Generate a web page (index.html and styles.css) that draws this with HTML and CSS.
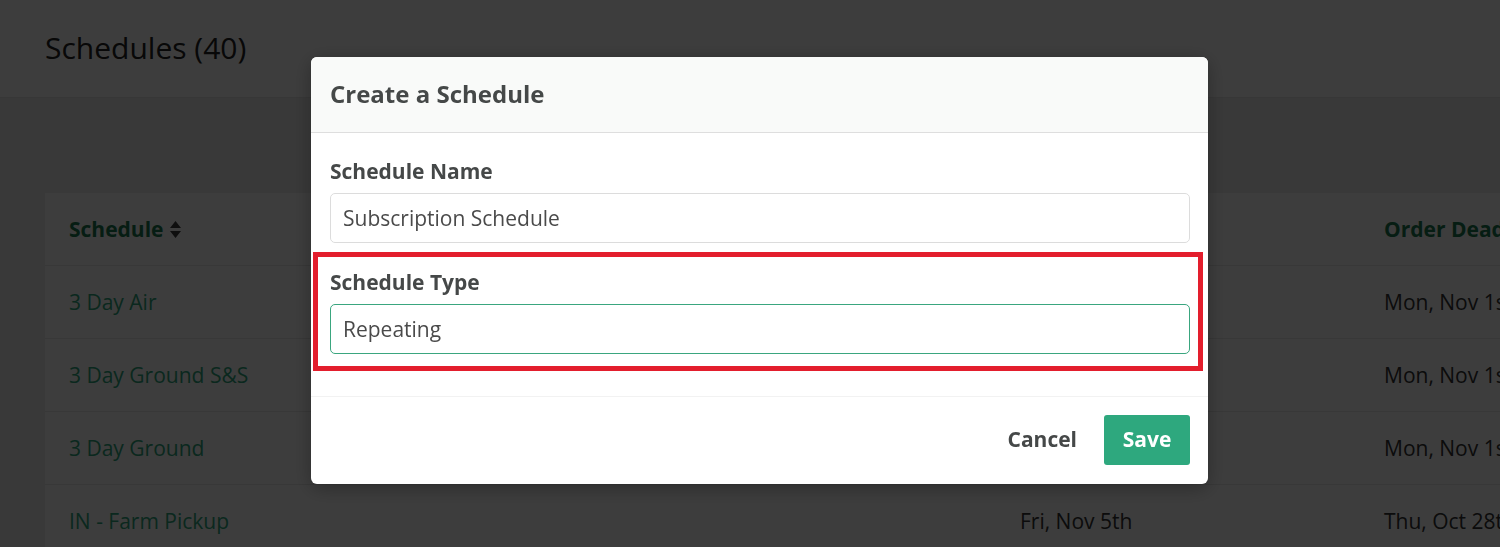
FILE: index.html
```html
<!DOCTYPE html>
<html>
<head>
    <title>Schedules</title>
    <link rel="stylesheet" href="styles.css">
</head>
<body>
    <div class="page-header">
        <h1>Schedules (40)</h1>
    </div>

    <div class="content">
        <div class="table-card">
            <div class="row head">
                <div class="col-name">Schedule
                    <svg class="sort" width="11" height="17" viewBox="0 0 11 17"><path d="M5.5 0 L11 7 H0 Z M0 10 H11 L5.5 17 Z" fill="#3a3a3a"/></svg>
                </div>
                <div class="col-date"></div>
                <div class="col-dead">Order Deadline</div>
            </div>
            <div class="row">
                <div class="col-name link">3 Day Air</div>
                <div class="col-date">Fri, Nov 5th</div>
                <div class="col-dead">Mon, Nov 1st</div>
            </div>
            <div class="row">
                <div class="col-name link">3 Day Ground S&amp;S</div>
                <div class="col-date">Fri, Nov 5th</div>
                <div class="col-dead">Mon, Nov 1st</div>
            </div>
            <div class="row">
                <div class="col-name link">3 Day Ground</div>
                <div class="col-date">Fri, Nov 5th</div>
                <div class="col-dead">Mon, Nov 1st</div>
            </div>
            <div class="row">
                <div class="col-name link">IN - Farm Pickup</div>
                <div class="col-date">Fri, Nov 5th</div>
                <div class="col-dead">Thu, Oct 28th</div>
            </div>
        </div>
    </div>

    <div class="backdrop">
        <div class="modal">
            <div class="modal-header">
                <h2>Create a Schedule</h2>
            </div>
            <div class="modal-body">
                <div class="form-group">
                    <label>Schedule Name</label>
                    <div class="input">Subscription Schedule</div>
                </div>
                <div class="form-group marked">
                    <label>Schedule Type</label>
                    <div class="input focus">Repeating</div>
                    <div class="highlight"></div>
                </div>
            </div>
            <div class="modal-footer">
                <button class="btn-cancel">Cancel</button>
                <button class="btn-save">Save</button>
            </div>
        </div>
    </div>
</body>
</html>
```

FILE: styles.css
```css
html, body { margin: 0; padding: 0; }
body {
    font-family: "Open Sans", "Noto Sans", sans-serif;
    background: #eeeeee;
    color: #4a4a4a;
    width: 1500px;
    height: 547px;
    overflow: hidden;
}

.page-header {
    background: #fff;
    height: 97px;
    border-bottom: 1px solid #e6e6e6;
    padding: 0 45px;
    display: flex;
    align-items: center;
}
.page-header h1 {
    margin: 0 0 2px 0;
    font-size: 30px;
    font-weight: 400;
    color: #222;
}

.content { padding: 95px 0 0 45px; }
.table-card {
    background: #fff;
    width: 1600px;
    font-size: 21px;
}
.row {
    display: flex;
    align-items: center;
    height: 72px;
    border-bottom: 1px solid #e8e8e8;
    padding-left: 24px;
    color: #333;
}
.row.head { font-weight: 700; color: #1a7a50; }
.col-name { width: 951px; display: flex; align-items: center; }
.col-date { width: 364px; }
.col-dead { flex: 1; }
.link { color: #2ea87e; }
.sort { margin-left: 7px; }

.backdrop {
    position: fixed;
    inset: 0;
    background: rgba(0, 0, 0, 0.76);
    display: flex;
    justify-content: center;
    align-items: flex-start;
    padding: 57px 0 0 19px;
}
.modal {
    width: 897px;
    background: #fff;
    border-radius: 6px;
    box-shadow: 0 4px 20px rgba(0, 0, 0, 0.3);
    overflow: hidden;
}
.modal-header {
    background: #f9faf9;
    border-bottom: 1px solid #dedede;
    height: 75px;
    padding: 0 19px;
    display: flex;
    align-items: center;
}
.modal-header h2 {
    margin: 0 0 2px 0;
    font-size: 24px;
    font-weight: 700;
    color: #454848;
}
.modal-body {
    padding: 26px 18px 42px 19px;
    border-bottom: 1px solid #f2f2f2;
}
.form-group { position: relative; }
.form-group + .form-group { margin-top: 27px; }
.form-group label {
    display: block;
    font-size: 21px;
    font-weight: 700;
    line-height: 25px;
    margin-bottom: 9px;
    color: #454848;
}
.input {
    height: 48px;
    border: 1px solid #dcdcdc;
    border-radius: 5px;
    padding: 0 12px;
    display: flex;
    align-items: center;
    font-size: 21px;
    color: #4a4a4a;
}
.input.focus { border-color: #3aa67f; }
.highlight {
    position: absolute;
    left: -17px;
    right: -13px;
    top: -18px;
    bottom: -17px;
    border: 5px solid #e31e2d;
}

.modal-footer {
    display: flex;
    justify-content: flex-end;
    align-items: center;
    gap: 27px;
    padding: 18px 18px 19px;
}
button {
    font-family: inherit;
    font-size: 21px;
    font-weight: 700;
    border: none;
    cursor: pointer;
    line-height: 1.2;
}
.btn-cancel { background: none; color: #454848; padding: 0; }
.btn-save {
    background: #2ea87e;
    color: #fff;
    width: 86px;
    height: 50px;
    border-radius: 3px;
}
```
